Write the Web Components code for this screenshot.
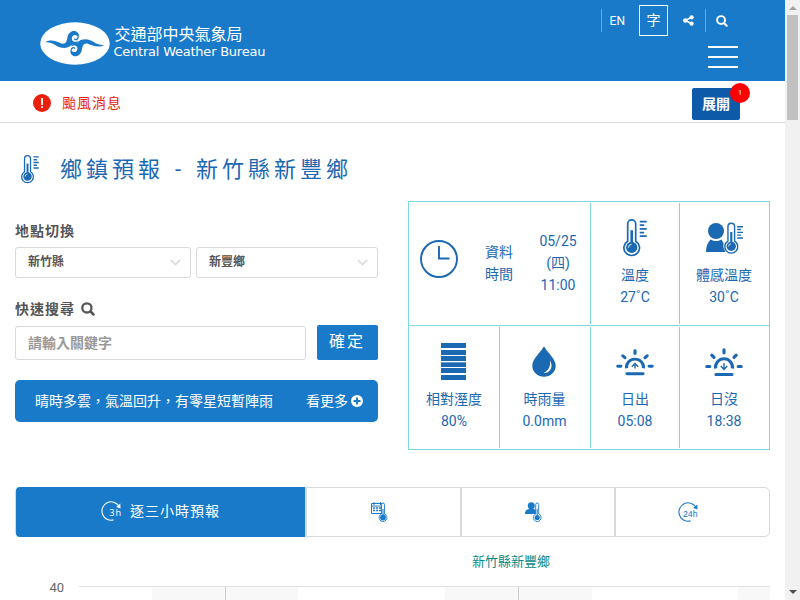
<!DOCTYPE html>
<html lang="zh-Hant">
<head>
<meta charset="utf-8">
<title>鄉鎮預報 - 新竹縣新豐鄉</title>
<style>
html,body{margin:0;height:600px;overflow:hidden;background:#fff}
body{font-family:Roboto,"Noto Sans CJK TC",sans-serif;font-size:14px;color:#4d4d4d}
</style>
</head>
<body>
<weather-app></weather-app>
<script>
const define = (name, html, setup) => {
  const template = document.createElement('template');
  template.innerHTML = '<style>*{box-sizing:border-box}</style>' + html;
  customElements.define(name, class extends HTMLElement {
    constructor() {
      super();
      this.attachShadow({mode: 'open'}).append(template.content.cloneNode(true));
    }
    connectedCallback() { if (setup) setup(this, this.shadowRoot); }
  });
};

const thermo = `<path d="M8.5 23V5.5a4 4 0 0 1 8 0V23a7.8 7.8 0 1 1-8 0Z" fill="#fff" stroke="currentColor" stroke-width="1.7"/>
  <circle cx="12.5" cy="29.3" r="5.6" fill="currentColor"/><path d="M12.5 12v15" stroke="currentColor" stroke-width="2.6"/><path d="M9.3 29.5a3.3 3.3 0 0 1 3-3.3" fill="none" stroke="#fff" stroke-width="1"/>`;
const ticks = `<path d="M20.5 3.2h7M20.5 6.9h4.5M20.5 10.6h7M20.5 14.3h4.5M20.5 18h7" stroke="currentColor" stroke-width="1.8" fill="none"/>`;
const sun = `<path d="M10.6 20.6A8.5 8.5 0 1 1 27.4 20.6" fill="none" stroke="currentColor" stroke-width="3"/>
  <path d="M19 1.8v3M6.8 7.2l2.2 2.2M31.2 7.2L29 9.4M1.8 18.5h3M33.2 18.5h3M11 26.5h16" stroke="currentColor" stroke-width="3.2" stroke-linecap="round"/>`;
const swirl = `<path d="M5 20.3C11 16.5 17 20 21.5 21.5C26 22.5 26.8 19 27.5 15C28.5 10.4 32 8.7 34.5 9C38.4 9.5 39.8 13 38.3 16C37.4 12.4 33 12 32 15.5C31 20 36 20.7 38 18.5C37.3 22 33 22 31 23.5C27 27.2 20 26.3 16 23.5C12 20.7 9 20.1 5 20.3Z"/><path d="M37.9 14.8c.4 2.6-2.3 3.7-3.6 1.8" fill="none" stroke="#1a7aca" stroke-width="1.3"/>`;
const dayArc = `<path d="M12.5 18.9A9.2 9.2 0 1 1 18 5.2" fill="none" stroke="currentColor" stroke-width="1.1"/><path d="M19.3 2.6l.2 4.8-4.3-1.4z" fill="currentColor"/>`;
const icons = {
  logo: ['0 0 70 43', `<ellipse cx="35" cy="21.5" rx="34.8" ry="21.2" fill="#fff"/>
    <g fill="#1a7aca">${swirl}<g transform="translate(-1.5 0) rotate(180 35.4 21.6)">${swirl}</g></g>`],
  alert: ['0 0 18 18', `<circle cx="9" cy="9" r="9" fill="#e9200c"/><path d="M9 4v7" stroke="#fff" stroke-width="1.8"/><path d="M9 12.2v1.9" stroke="#fff" stroke-width="1.8"/>`],
  share: ['0 0 12 12', `<path d="M9.5 2.3L2.6 6l6.9 3.6" fill="none" stroke="currentColor" stroke-width="1.7"/><circle cx="9.4" cy="2.5" r="2.3" fill="currentColor"/><circle cx="2.5" cy="6" r="2.4" fill="currentColor"/><circle cx="9.4" cy="9.5" r="2.3" fill="currentColor"/>`],
  search: ['0 0 14 14', `<circle cx="5.9" cy="5.9" r="4.6" fill="none" stroke="currentColor" stroke-width="2.3"/><path d="M9.5 9.5l3 3" stroke="currentColor" stroke-width="2.5" stroke-linecap="round"/>`],
  plus: ['0 0 12 12', `<circle cx="6" cy="6" r="6" fill="currentColor"/><path d="M6 2.5v7M2.5 6h7" stroke="#1a7aca" stroke-width="2"/>`],
  chevron: ['0 0 11 7', `<path d="M.8.9L5.5 5.6L10.2.9" fill="none" stroke="#ddd" stroke-width="1.8"/>`],
  clock: ['0 0 38 38', `<circle cx="19" cy="19" r="18" fill="none" stroke="currentColor" stroke-width="1.9"/><path d="M19 6v12.5h10.5" fill="none" stroke="currentColor" stroke-width="1.9"/>`],
  thermo: ['3.8 .6 24 37.4', thermo + ticks],
  feel: ['0 0 38 31', `<circle cx="10" cy="9" r="8" fill="currentColor"/><path d="M0 30c.3-6 2-10.5 5-12.5 3 2 7 2 10 0 2.5 2 4 6 4.2 12.5Z" fill="currentColor"/><circle cx="25.3" cy="24" r="8" fill="#fff"/><g transform="translate(14.9 0) scale(.83)">${thermo}</g><g transform="translate(14.4 2.3) scale(.82 .76)">${ticks}</g>`],
  humidity: ['0 0 25 37', `<path d="M0 0h25v5H0zM0 7h25v5H0zM0 13h25v5H0zM0 19h25v5H0zM0 25h25v5H0zM0 32h25v5H0z" fill="currentColor"/><path d="M0 19.5h25" stroke="#6798c9"/>`],
  drop: ['0 0 24 31', `<path d="M12 .2C15.8 7 23.7 12.6 23.7 19.8A11.7 11 0 0 1 .3 19.8C.3 12.6 8.2 7 12 .2Z" fill="currentColor"/><path d="M17.8 14.2c4.5 6.7-.4 13.3-6.2 12.8 4.9-2.5 7.4-7 6.2-12.8Z" fill="#fff"/>`],
  rise: ['0 0 38 30', sun + `<path d="M19 21v-5.2M15.8 19l3.2-3.4 3.2 3.4" fill="none" stroke="currentColor" stroke-width="1.4"/>`],
  set: ['0 0 38 30', sun + `<path d="M19 15v6M15.8 18l3.2 3.4 3.2-3.4" fill="none" stroke="currentColor" stroke-width="1.4"/>`],
  h3: ['0 0 20 20', dayArc + `<text x="8.2" y="15" font-size="9.2" font-family="Open Sans" fill="currentColor">3h</text>`],
  h24: ['0 0 20 20', dayArc + `<text x="4.9" y="15.3" font-size="9" textLength="14.8" lengthAdjust="spacingAndGlyphs" font-family="Liberation Sans" fill="currentColor">24h</text>`],
  calendar: ['0 0 16 20', `<path d="M.5 1.5h12v10H.5zM.5 4h12" fill="none" stroke="currentColor"/><path d="M3 0v3M9.5 0v3" stroke="currentColor"/><path d="M2 6h2M5 6h2M8 6h2M2 8.5h2M5 8.5h2M8 8.5h2" stroke="currentColor" stroke-width="1.5"/>
    <path d="M10.5 12V2.5a1.5 1.5 0 0 1 3 0V12a3.9 3.9 0 1 1-3 0Z" fill="#fff" stroke="currentColor" stroke-width=".9"/><circle cx="12" cy="15.5" r="2.9" fill="currentColor"/><path d="M12 7v7" stroke="currentColor" stroke-width="1.1"/>`],
  person: ['0 0 17 20', `<circle cx="6.3" cy="3.8" r="3.5" fill="currentColor"/><path d="M0 12c0-3.4 2-4.8 4-5h4.6c2 .2 3 1.6 3 5Z" fill="currentColor"/>
    <path d="M10.7 12V2.5a1.5 1.5 0 0 1 3 0V12a3.9 3.9 0 1 1-3 0Z" fill="#fff" stroke="currentColor" stroke-width=".9"/><circle cx="12.2" cy="15.5" r="2.6" fill="currentColor"/><path d="M12.2 7v7" stroke="currentColor" stroke-width="1"/>`]
};

define('ui-icon', `<style>:host{display:block;flex:none}svg{display:block;width:100%;height:100%;overflow:visible}</style><svg></svg>`, (el, root) => {
  const [box, body] = icons[el.getAttribute('name')];
  const svg = root.querySelector('svg');
  svg.setAttribute('viewBox', box);
  svg.setAttribute('preserveAspectRatio', 'none');
  svg.innerHTML = body;
});

define('site-brand', `<style>
:host{display:flex;gap:5px}ui-icon{width:70px;height:43px}
.names{display:flex;flex-direction:column;color:#fff;white-space:nowrap}
.zh{font:16px/20px "Noto Sans CJK TC",sans-serif;height:20px;margin:1px 0 0}
.en{font:13px/18px "DejaVu Sans",sans-serif;letter-spacing:-.23px;margin-left:-1px}
</style><ui-icon name="logo"></ui-icon><div class="names"><span class="zh">交通部中央氣象局</span><span class="en">Central Weather Bureau</span></div>`);

define('site-header', `<style>
:host{display:flex;justify-content:space-between;height:81px;background:#1a7aca;color:#fff;padding:0 47px 0 39.5px}
site-brand{margin-top:22px}
.side{display:flex;flex-direction:column;align-items:flex-end}
nav{display:flex;align-items:center;margin-top:5px;height:31px;margin-right:10px}
.rule{width:1px;height:23px;background:#66a8de}
.en{font-size:12px;margin:0 14px 0 8px}
.size{width:29px;height:31px;border:1px solid #fff;text-align:center;font-size:14px;line-height:29px;margin-right:15px}
.burger{width:30px;height:22px;margin-top:10px;display:flex;flex-direction:column;justify-content:space-between}
.burger i{height:2px;background:#fff}
</style><site-brand></site-brand><div class="side"><nav><span class="rule"></span><span class="en">EN</span><span class="size">字</span>
<ui-icon name="share" style="width:11px;height:11px"></ui-icon><span class="rule" style="margin:0 10px 0 11px"></span><ui-icon name="search" style="width:12px;height:12px"></ui-icon></nav>
<div class="burger"><i></i><i></i><i></i></div></div>`);

define('alert-bar', `<style>
:host{display:flex;height:42px;border-bottom:1px solid #d8d8d8;padding:0 45px 0 33px}
ui-icon{width:18px;height:18px;margin-top:13px}
.msg{color:#e9200c;font-size:14px;letter-spacing:1px;line-height:20px;margin:12px 0 0 11px;flex:1}
.btn{position:relative;width:48px;height:32px;margin-top:7px;background:#0d5aa9;border-radius:2px;color:#fff;font-weight:700;text-align:center;line-height:32px}
.badge{position:absolute;right:-10px;top:-5px;width:20px;height:20px;border-radius:50%;background:red;font-size:8px;font-weight:400;line-height:19px}
</style><ui-icon name="alert"></ui-icon><span class="msg">颱風消息</span><span class="btn">展開<span class="badge">1</span></span>`);

define('page-title', `<style>
:host{display:flex;height:79px;padding:33px 0 0 21px;color:#1b68b3}
ui-icon{width:18px;height:28px;margin-right:21px;margin-top:-1px}
span{font-size:22px;letter-spacing:4px;word-spacing:1.5px;line-height:30px;margin-top:-1px;white-space:pre}
</style><ui-icon name="thermo"></ui-icon><span><slot></slot></span>`);

define('place-select', `<style>
:host{display:flex;align-items:center;justify-content:space-between;height:31px;border:1px solid #d9d9d9;border-radius:3px;padding:0 9px 0 12px;font-size:12px;font-weight:700;color:#555}
span{line-height:18px;margin-top:-2px}ui-icon{width:11px;height:7px}
</style><span><slot></slot></span><ui-icon name="chevron"></ui-icon>`);

define('search-panel', `<style>
:host{display:block;width:363px}
h2{display:flex;align-items:center;gap:6px;margin:0;font-size:14px;font-weight:700;letter-spacing:1px;line-height:20px;height:20px;color:#555}
.row{display:flex}
.input{width:291px;height:34px;border:1px solid #d9d9d9;border-radius:3px;padding-left:12px;line-height:32px;color:#999;font-weight:700;margin-top:1px}
.ok{width:61px;height:35px;background:#1a7aca;color:#fff;border-radius:2px;margin-left:11px;font-size:16px;letter-spacing:2px;line-height:33px;text-align:center;padding-right:1px}
.news{display:flex;justify-content:space-between;align-items:center;height:42px;background:#1a7aca;color:#fff;border-radius:5px;margin-top:20px;padding:0 15px 0 20px;line-height:20px}
.news>span:first-child{margin-top:-1px}
.more{display:flex;align-items:center;gap:3px}
</style>
<h2 style="margin-top:20px">地點切換</h2>
<div class="row" style="gap:5px;margin-top:6px"><place-select style="width:176px">新竹縣</place-select><place-select style="width:182px">新豐鄉</place-select></div>
<h2 style="margin-top:21px">快速搜尋<ui-icon name="search" style="width:14px;height:14px"></ui-icon></h2>
<div class="row" style="margin-top:6px"><div class="input">請輸入關鍵字</div><div class="ok">確定</div></div>
<div class="news"><span>晴時多雲，氣溫回升，有零星短暫陣雨</span><span class="more">看更多<ui-icon name="plus" style="width:12px;height:12px"></ui-icon></span></div>`);

define('metric-cell', `<style>
:host{display:flex;flex-direction:column;align-items:center;padding-top:12px;line-height:22px;text-align:center}
.icon{height:49px;display:flex;align-items:center;justify-content:center}
</style><div class="icon"><slot name="icon"></slot></div><slot></slot>`);

define('current-weather', `<style>
:host{display:grid;grid-template-rows:124px 123px;width:362px;height:249px;border:1px solid #7dd8e0;color:#1b68b3}
.row{display:grid;padding-top:1px}
.row.top{border-bottom:1px solid #7dd8e0;grid-template-columns:182px 89px 89px;padding-bottom:1px}
.row.bottom{grid-template-columns:91px 91px 89px 89px;padding:1px 0}
.row>*{border-right:1px solid #7dd8e0}.row>:last-child{border-right:0;padding-right:1px}
.bottom>:nth-child(2){padding-right:1px}
.time{display:grid;grid-template-columns:60px 60px 58px;align-items:center;line-height:22px;text-align:center;padding-bottom:2px}
.time ui-icon{width:38px;height:38px;margin:-7px 0 0 11px}
</style>
<div class="row top"><div class="time"><ui-icon name="clock"></ui-icon><span>資料<br>時間</span><span>05/25<br>(四)<br>11:00</span></div>
<metric-cell><ui-icon slot="icon" name="thermo" style="width:24px;height:37px;margin-top:-4px"></ui-icon><span>溫度</span><span>27˚C</span></metric-cell>
<metric-cell><ui-icon slot="icon" name="feel" style="width:38px;height:31px;margin:-5px 0 0 2px"></ui-icon><span>體感溫度</span><span>30˚C</span></metric-cell></div>
<div class="row bottom">
<metric-cell><ui-icon slot="icon" name="humidity" style="width:25px;height:37px;margin:-4px 1px 0 0"></ui-icon><span>相對溼度</span><span>80%</span></metric-cell>
<metric-cell><ui-icon slot="icon" name="drop" style="width:24px;height:31px;margin:-4px 1px 0 0"></ui-icon><span>時雨量</span><span>0.0mm</span></metric-cell>
<metric-cell><ui-icon slot="icon" name="rise" style="width:38px;height:28px;margin-top:-2px"></ui-icon><span>日出</span><span>05:08</span></metric-cell>
<metric-cell><ui-icon slot="icon" name="set" style="width:38px;height:30px;margin-top:-2px"></ui-icon><span>日沒</span><span>18:38</span></metric-cell></div>`);

define('forecast-tabs', `<style>
:host{display:grid;grid-template-columns:291px 155px 154px 153px;height:50px;border:1px solid #d9d9d9;border-radius:5px;width:755px;color:#1a7aca}
.tab{display:flex;align-items:center;justify-content:center;border-right:2px solid #d9d9d9;padding:0 10px 1px 0}
.tab:last-child{border:0}
.active{background:#1a7aca;color:#fff;margin:-1px 0;border-radius:4px 0 0 4px;gap:9px;letter-spacing:1px;background-clip:padding-box;padding:0}
.active ui-icon{margin-top:-2px}.active span{margin-top:-4px}
</style><div class="tab active"><ui-icon name="h3" style="width:20px;height:20px"></ui-icon><span>逐三小時預報</span></div>
<div class="tab"><ui-icon name="calendar" style="width:16px;height:20px"></ui-icon></div>
<div class="tab"><ui-icon name="person" style="width:17px;height:20px"></ui-icon></div>
<div class="tab"><ui-icon name="h24" style="width:20px;height:20px"></ui-icon></div>`);

define('forecast-chart', `<style>
:host{display:grid;grid-template-columns:64px 691px;margin-top:15px}
.name{grid-column:2;justify-self:center;font-size:13px;line-height:20px;color:#088a8a;padding-left:173px}
.axis{font:13px/16px Roboto,sans-serif;color:#666;text-align:right;padding-right:15px;margin-top:8px}
.plot{margin-top:14px;height:40px;border-top:1px solid #e2e2e2;display:grid;grid-template-columns:73px 146px 147px 147px 146px 32px}
.band{background:#f8f8f8;display:flex;justify-content:center}
.band i{width:1px;background:#ccc}
</style><div class="name">新竹縣新豐鄉</div><div class="axis">40</div>
<div class="plot"><span></span><span class="band"><i></i></span><span></span><span class="band"><i></i></span><span></span><span class="band"></span></div>`);

define('scroll-rail', `<style>
:host{display:flex;flex-direction:column;align-items:center;width:15px;height:600px;background:#f1f1f1}
.up,.down{border:4px solid transparent;width:0;height:0}
.up{border-bottom-color:#a3a3a3;border-top:0;margin-top:6px}
.thumb{width:11px;height:105px;background:#c1c1c1;margin-top:5px}
.down{border-top-color:#505050;border-bottom:0;margin-top:auto;margin-bottom:6px}
</style><i class="up"></i><i class="thumb"></i><i class="down"></i>`);

define('weather-app', `<style>
:host{display:grid;grid-template-columns:785px 15px;height:600px;overflow:hidden}
main{height:600px;overflow:hidden}
.overview{display:flex;justify-content:space-between;padding:0 15px;margin-top:-1px}
.lower{padding:37px 15px 0}
</style><main><site-header></site-header><alert-bar></alert-bar><page-title>鄉鎮預報 - 新竹縣新豐鄉</page-title>
<div class="overview"><search-panel></search-panel><current-weather></current-weather></div>
<div class="lower"><forecast-tabs></forecast-tabs><forecast-chart></forecast-chart></div></main><scroll-rail></scroll-rail>`);
</script>
</body>
</html>
